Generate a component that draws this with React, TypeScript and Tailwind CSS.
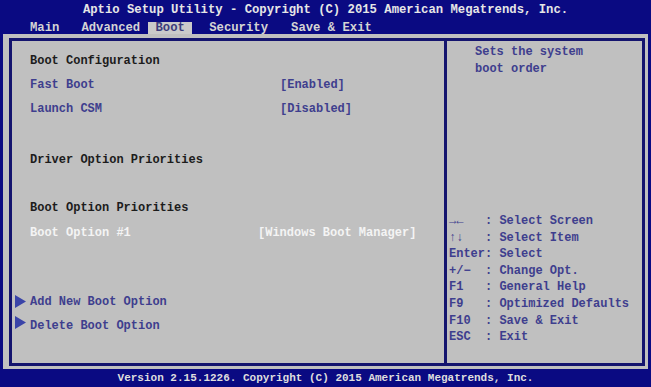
import React from "react";

const Tri = () => (
  <svg width="11" height="13" viewBox="0 0 11 13" className="shrink-0">
    <polygon points="0,0 11,6.5 0,13" fill="#3a44a8" />
  </svg>
);

export default function App() {
  const mono = { fontFamily: '"Liberation Mono", "Courier New", monospace' };
  return (
    <div
      className="w-[651px] h-[387px] bg-[#0a0a82] flex flex-col font-bold overflow-hidden"
      style={mono}
    >
      <div className="h-[19px] flex items-center justify-center text-[12.25px] text-[#e6e6e6] whitespace-pre leading-none pt-[2px]">
        Aptio Setup Utility - Copyright (C) 2015 American Megatrends, Inc.
      </div>
      <div className="h-[15px] flex items-end text-[12.25px] text-[#d4d4d4] whitespace-pre leading-none">
        <span className="ml-[30px] h-[12px] flex items-center">Main</span>
        <span className="ml-[22px] h-[12px] flex items-center">Advanced</span>
        <span className="ml-[8px] h-[12px] w-[44px] bg-[#cacaca] text-[#3c3c7c] flex items-center justify-center">
          Boot
        </span>
        <span className="ml-[17px] h-[12px] flex items-center">Security</span>
        <span className="ml-[23px] h-[12px] flex items-center">Save &amp; Exit</span>
      </div>
      <div className="mx-[3px] h-[335px] bg-[#c0c0c0] pt-[4px] pl-[6px] pr-[3px] pb-[3px] flex">
        <div className="flex-1 border-[3px] border-[#14146e] flex text-[12px] leading-none">
          <div className="w-[432px] flex flex-col text-[#3e3e8e]">
            <div className="h-[24px] mt-[8px] flex items-center pl-[18px] text-[#1c1c1c]">
              Boot Configuration
            </div>
            <div className="h-[24px] flex items-center pl-[18px]">
              <span className="w-[250px]">Fast Boot</span>
              <span>[Enabled]</span>
            </div>
            <div className="h-[24px] flex items-center pl-[18px]">
              <span className="w-[250px]">Launch CSM</span>
              <span>[Disabled]</span>
            </div>
            <div className="h-[24px] mt-[27px] flex items-center pl-[18px] text-[#1c1c1c]">
              Driver Option Priorities
            </div>
            <div className="h-[24px] mt-[24px] flex items-center pl-[18px] text-[#1c1c1c]">
              Boot Option Priorities
            </div>
            <div className="h-[24px] mt-[1px] flex items-center pl-[18px] text-[#f4f4f4]">
              <span className="w-[228px]">Boot Option #1</span>
              <span>[Windows Boot Manager]</span>
            </div>
            <div className="h-[24px] mt-[45px] flex items-center pl-[3px]">
              <span className="-mt-[2px]"><Tri /></span>
              <span className="ml-[4px]">Add New Boot Option</span>
            </div>
            <div className="h-[24px] flex items-center pl-[3px]">
              <span className="-mt-[8px]"><Tri /></span>
              <span className="ml-[4px]">Delete Boot Option</span>
            </div>
          </div>
          <div className="w-[3px] bg-[#14146e]" />
          <div className="flex-1 flex flex-col text-[#3e3e8e] whitespace-pre">
            <div className="mt-[3px] pl-[28px] leading-[17px]">
              <div>Sets the system</div>
              <div>boot order</div>
            </div>
            <div className="mt-[135px] pl-[2px] leading-[16.6px]">
              <div>{"→←   : Select Screen"}</div>
              <div>{"↑↓   : Select Item"}</div>
              <div>{"Enter: Select"}</div>
              <div>{"+/−  : Change Opt."}</div>
              <div>{"F1   : General Help"}</div>
              <div>{"F9   : Optimized Defaults"}</div>
              <div>{"F10  : Save & Exit"}</div>
              <div>{"ESC  : Exit"}</div>
            </div>
          </div>
        </div>
      </div>
      <div className="flex-1 flex items-center justify-center text-[11px] text-[#dedede] whitespace-pre leading-none">
        Version 2.15.1226. Copyright (C) 2015 American Megatrends, Inc.
      </div>
    </div>
  );
}
